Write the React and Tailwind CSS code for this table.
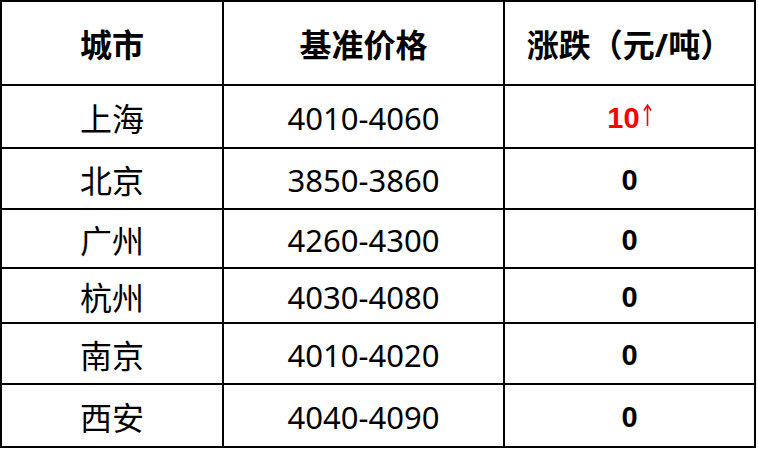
const rows = [
  { city: '上海', price: '4010-4060', change: '10', up: true, h: 'h-[61px]' },
  { city: '北京', price: '3850-3860', change: '0', h: 'h-[59px]' },
  { city: '广州', price: '4260-4300', change: '0', h: 'h-[57px]' },
  { city: '杭州', price: '4030-4080', change: '0', h: 'h-[53px]' },
  { city: '南京', price: '4010-4020', change: '0', h: 'h-[59px]' },
  { city: '西安', price: '4040-4090', change: '0', h: 'h-[61px]' },
];

const cjk = "font-['Noto_Sans','Noto_Sans_CJK_SC',sans-serif]";

function UpArrow() {
  return (
    <svg width="9" height="22" viewBox="0 0 9 22" className="ml-[3px] -translate-y-[2px]" fill="none" stroke="#ff0000" strokeWidth="1.6">
      <path d="M4.5 1.5V22" />
      <path d="M1 6.5L4.5 1.2L8 6.5" />
    </svg>
  );
}

export default function App() {
  return (
    <div className="h-[450px] w-[758px] bg-white">
      <div className="grid w-[756px] grid-cols-[220px_279px_249px] gap-[2px] bg-black p-[2px]">
        <div className={`flex h-[82px] items-center justify-center bg-white pt-1 text-[32px] font-bold text-black ${cjk}`}>
          城市
        </div>
        <div className={`flex h-[82px] items-center justify-center bg-white pt-1 text-[32px] font-bold text-black ${cjk}`}>
          基准价格
        </div>
        <div className={`flex h-[82px] items-center justify-center bg-white pt-1 text-[32px] font-bold text-black ${cjk}`}>
          涨跌（元/吨）
        </div>

        {rows.map((r) => (
          <div key={r.city} className="contents">
            <div className={`flex ${r.h} items-center justify-center bg-white pt-1 text-[32px] text-black ${cjk}`}>
              {r.city}
            </div>
            <div className={`flex ${r.h} items-center justify-center bg-white pt-1 text-[31px] text-black ${cjk}`}>
              {r.price}
            </div>
            <div className="flex items-center justify-center bg-white pt-1 font-['Liberation_Sans',Arial,sans-serif] text-[29px] font-bold">
              {r.up ? (
                <span className="flex items-baseline text-[#ff0000]">
                  <span>{r.change}</span>
                  <UpArrow />
                </span>
              ) : (
                <span className="text-black">{r.change}</span>
              )}
            </div>
          </div>
        ))}
      </div>
    </div>
  );
}
